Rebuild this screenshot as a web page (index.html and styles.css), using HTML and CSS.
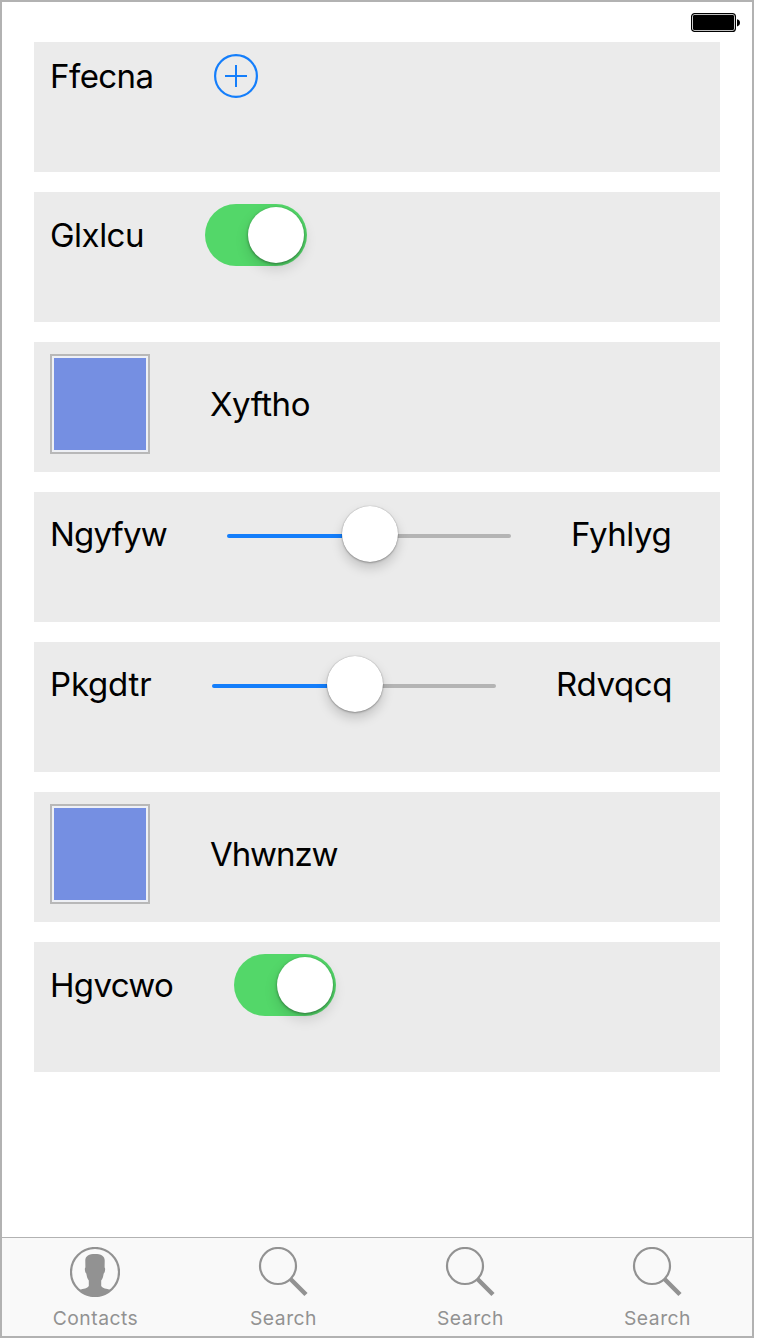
FILE: index.html
```html
<!DOCTYPE html>
<html lang="en">
<head>
<meta charset="utf-8">
<title>Controls</title>
<link rel="stylesheet" href="styles.css">
</head>
<body>
<div class="screen">
  <header class="status">
    <svg class="battery" width="50" height="20" viewBox="0 0 50 20">
      <rect x=".6" y=".6" width="43.8" height="17.800" rx="3" fill="none" stroke="#000" stroke-width="1.200"/>
      <rect x="2" y="2" width="41" height="15" rx="1.200"/>
      <path d="M46 6.200c2.200.4 3 1.800 3 3.600s-.8 3.200-3 3.600z"/>
    </svg>
  </header>
  <main class="rows">
    <section class="row">
      <span class="label ffecna">Ffecna</span>
      <svg class="add" width="44" height="44" viewBox="0 0 44 44" fill="none" stroke="#147efb" stroke-width="2.200"><circle cx="22" cy="22" r="20.900"/><path stroke-width="2" d="M11 22h22M22 11v22"/></svg>
    </section>
    <section class="row">
      <span class="label glxlcu">Glxlcu</span>
      <div class="switch"><div class="thumb"></div></div>
    </section>
    <section class="row">
      <div class="swatch"></div>
      <span class="label xyftho">Xyftho</span>
    </section>
    <section class="row">
      <span class="label ngyfyw">Ngyfyw</span>
      <div class="slider"><div class="track filled"></div><div class="thumb"></div><div class="track"></div></div>
      <span class="label fyhlyg">Fyhlyg</span>
    </section>
    <section class="row">
      <span class="label pkgdtr">Pkgdtr</span>
      <div class="slider"><div class="track filled"></div><div class="thumb"></div><div class="track"></div></div>
      <span class="label rdvqcq">Rdvqcq</span>
    </section>
    <section class="row">
      <div class="swatch"></div>
      <span class="label vhwnzw">Vhwnzw</span>
    </section>
    <section class="row">
      <span class="label hgvcwo">Hgvcwo</span>
      <div class="switch"><div class="thumb"></div></div>
    </section>
  </main>
  <nav class="tabs">
    <div class="tab">
      <svg class="person" width="50" height="50" viewBox="0 0 50 50"><circle cx="25" cy="25" r="24" fill="none" stroke="#929292" stroke-width="2.200"/><path fill="#929292" d="M15.300 14C15 9 19 7 25 7s10 2 9.700 7l-.1 6.500c1 .5.600 5-.9 6-.5 3-1 5-2.500 7v5.500c1.500 2.500 5 2.500 9.500 4Q34 50 25 50T9.300 43c4.500-1.500 8-1.500 9.500-4v-5.500c-1.500-2-2-4-2.500-7-1.500-1-1.900-5.500-.9-6z"/></svg>
      <span class="caption">Contacts</span>
    </div>
    <div class="tab">
      <svg width="50" height="50" viewBox="0 0 50 50" fill="none" stroke="#929292"><circle cx="20" cy="19" r="18" stroke-width="2.200"/><path stroke-width="4.500" d="M32.500 32 48 47.500"/></svg>
      <span class="caption search">Search</span>
    </div>
    <div class="tab">
      <svg width="50" height="50" viewBox="0 0 50 50" fill="none" stroke="#929292"><circle cx="20" cy="19" r="18" stroke-width="2.200"/><path stroke-width="4.500" d="M32.500 32 48 47.500"/></svg>
      <span class="caption search">Search</span>
    </div>
    <div class="tab">
      <svg width="50" height="50" viewBox="0 0 50 50" fill="none" stroke="#929292"><circle cx="20" cy="19" r="18" stroke-width="2.200"/><path stroke-width="4.500" d="M32.500 32 48 47.500"/></svg>
      <span class="caption search">Search</span>
    </div>
  </nav>
</div>
</body>
</html>
```
FILE: styles.css
```css
* { box-sizing: border-box; }
body { margin: 0; background: #fff; font-family: Inter, "Liberation Sans", sans-serif; }
svg { display: block; flex: none; }
.screen { width: 754px; height: 1338px; border: 2px solid #b2b2b2; display: flex; flex-direction: column; }
.status { height: 40px; padding: 11px 11px 0 0; display: flex; justify-content: flex-end; align-items: flex-start; }
.rows { flex: 1; padding: 0 32px; display: flex; flex-direction: column; gap: 20px; }
.row { height: 130px; padding: 12px 16px; background: #ebebeb; display: flex; align-items: center; align-content: flex-start; flex-wrap: wrap; column-gap: 60px; }
.label { font-size: 33px; line-height: 40px; white-space: nowrap; color: #000; }
.ffecna { width: 104px; letter-spacing: -.55px; }
.glxlcu { width: 95px; letter-spacing: -.5px; }
.xyftho { width: 101px; letter-spacing: -.45px; }
.ngyfyw { width: 117px; letter-spacing: -.85px; }
.fyhlyg { width: 101px; letter-spacing: -.45px; }
.pkgdtr { width: 102px; letter-spacing: -.2px; }
.rdvqcq { width: 116px; letter-spacing: -.35px; }
.vhwnzw { width: 128px; letter-spacing: -1.1px; }
.hgvcwo { width: 124px; letter-spacing: -.65px; }
.switch { width: 102px; height: 62px; padding: 3px; border-radius: 31px; background: #53d769; display: flex; justify-content: flex-end; }
.thumb { width: 56px; height: 56px; flex: none; border-radius: 50%; background: #fff; }
.switch .thumb { box-shadow: 0 1px 3px rgba(0,0,0,.4), 0 6px 14px rgba(0,0,0,.14); }
.slider { width: 284px; height: 60px; display: flex; align-items: center; }
.slider .thumb { margin: 0 -2px 0 0; position: relative; box-shadow: 0 0 1px rgba(0,0,0,.35), 0 1px 2px rgba(0,0,0,.25), 0 6px 12px rgba(0,0,0,.18); }
.track { flex: 1; height: 4px; margin-top: 4px; background: #b4b4b4; border-radius: 0 2px 2px 0; }
.filled { background: #147efb; border-radius: 2px 0 0 2px; }
.swatch { width: 100px; height: 100px; border: 2px solid #b8b8b8; padding: 2px; background: #758fe2; background-clip: content-box; box-shadow: inset 0 0 0 2px #eef0f5; }
.tabs { height: 99px; padding-right: 2px; border-top: 1px solid #b2b2b2; background: #f9f9f9; display: flex; }
.tab { flex: 1; padding-top: 9px; display: flex; flex-direction: column; align-items: center; gap: 9px; }
.person { margin-right: 1px; }
.caption { font-size: 19.3px; line-height: 24px; color: #929292; letter-spacing: .5px; }
.search { margin-left: 2px; }
```
